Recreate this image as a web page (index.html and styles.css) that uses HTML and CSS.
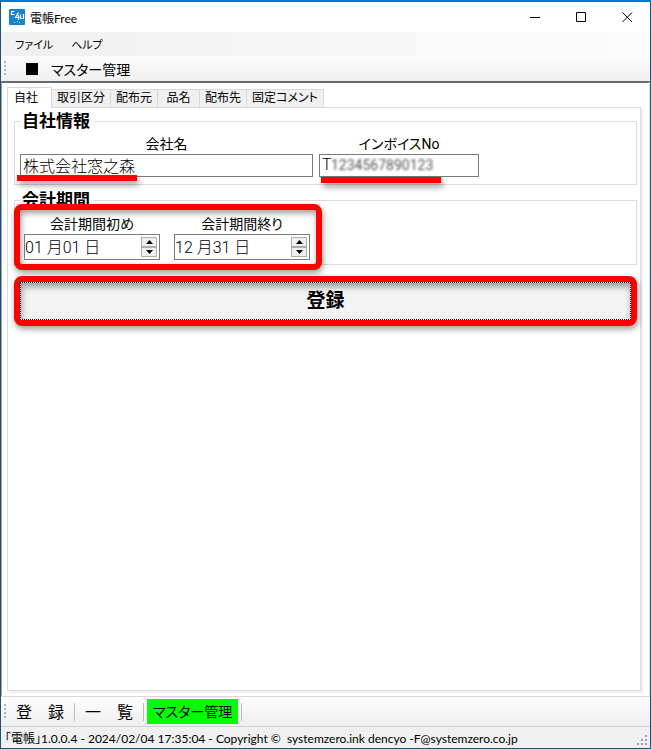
FILE: index.html
```html
<!DOCTYPE html>
<html lang="ja">
<head>
    <meta charset="UTF-8">
    <meta name="viewport" content="width=device-width, initial-scale=1.0">
    <title>電帳Free</title>
    <link rel="stylesheet" href="styles.css">
</head>
<body>
    <header class="titlebar">
        <svg class="app-icon" width="16" height="16" viewBox="0 0 16 16">
            <rect width="16" height="16" rx="1" fill="#1683cf"/>
            <path d="M5.500 2.500H2.500V5.500H5.500M9.500 3.500L6.500 8.500H10.500M9.500 6V11M11.500 5.500V9.500H14.500V5" fill="none" stroke="#fff" stroke-width="1.200"/>
            <path d="M5 13.500H6M8 12.500H9M10 13.500H11" stroke="#bfe2f7"/>
        </svg>
        <h1>電帳Free</h1>
        <div class="window-buttons">
            <button type="button" aria-label="最小化"><svg width="11" height="11"><path d="M0 5.500H10" stroke="#000"/></svg></button>
            <button type="button" aria-label="最大化"><svg width="11" height="11"><path d="M.5 .5H9.500V9.500H.5Z" fill="none" stroke="#000"/></svg></button>
            <button type="button" aria-label="閉じる"><svg width="11" height="11"><path d="M.5 .5L10 10M10 .5L.5 10" stroke="#000"/></svg></button>
        </div>
    </header>

    <nav class="menu">
        <button type="button">ファイル</button>
        <button type="button">ヘルプ</button>
    </nav>

    <div class="toolbar toolbar-title">
        <span class="grip"></span>
        <span class="square"></span>
        <h2>マスター管理</h2>
    </div>

    <main class="content">
        <div class="tabs" role="tablist">
            <button type="button" class="tab active" role="tab" aria-selected="true">自社</button>
            <button type="button" class="tab" role="tab">取引区分</button>
            <button type="button" class="tab" role="tab">配布元</button>
            <button type="button" class="tab" role="tab">品名</button>
            <button type="button" class="tab" role="tab">配布先</button>
            <button type="button" class="tab" role="tab">固定コメント</button>
        </div>

        <form class="panel">
            <fieldset class="group">
                <legend>自社情報</legend>
                <div class="fields">
                    <div class="field company">
                        <label for="company">会社名</label>
                        <input type="text" id="company" value="株式会社窓之森">
                        <span class="underline"></span>
                    </div>
                    <div class="field invoice">
                        <label for="invoice">インボイスNo</label>
                        <input type="text" id="invoice" value="T">
                        <span class="mosaic">1234567890123</span>
                        <span class="underline"></span>
                    </div>
                </div>
            </fieldset>

            <fieldset class="group period">
                <legend>会計期間</legend>
                <div class="marked dates">
                    <div class="field">
                        <label for="start">会計期間初め</label>
                        <div class="spinner">
                            <input type="text" id="start" value="01 月01 日">
                            <div class="arrows">
                                <button type="button" aria-label="上"><svg width="7" height="4"><path d="M0 4L3.500 0L7 4Z"/></svg></button>
                                <button type="button" aria-label="下"><svg width="7" height="4"><path d="M0 0L3.500 4L7 0Z"/></svg></button>
                            </div>
                        </div>
                    </div>
                    <div class="field">
                        <label for="end">会計期間終り</label>
                        <div class="spinner">
                            <input type="text" id="end" value="12 月31 日">
                            <div class="arrows">
                                <button type="button" aria-label="上"><svg width="7" height="4"><path d="M0 4L3.500 0L7 4Z"/></svg></button>
                                <button type="button" aria-label="下"><svg width="7" height="4"><path d="M0 0L3.500 4L7 0Z"/></svg></button>
                            </div>
                        </div>
                    </div>
                </div>
            </fieldset>

            <div class="marked submit">
                <button type="button">登録</button>
            </div>
        </form>
    </main>

    <nav class="toolbar toolbar-bottom">
        <span class="grip"></span>
        <button type="button">登　録</button>
        <span class="separator"></span>
        <button type="button">一　覧</button>
        <span class="separator"></span>
        <button type="button" class="current">マスター管理</button>
        <span class="separator"></span>
    </nav>

    <footer class="status">
        <span>｢電帳｣1.0.0.4 - 2024/02/04 17:35:04 - Copyright ©&nbsp; systemzero.ink dencyo -F@systemzero.co.jp</span>
        <svg class="resize" width="11" height="11" fill="#a0a0a0">
            <path d="M8 0h2v2h-2zM4 4h2v2h-2zM8 4h2v2h-2zM0 8h2v2h-2zM4 8h2v2h-2zM8 8h2v2h-2z"/>
        </svg>
    </footer>
</body>
</html>
```
FILE: styles.css
```css
* {
    margin: 0;
    padding: 0;
    box-sizing: border-box;
}

body {
    display: flex;
    flex-direction: column;
    min-height: 100vh;
    background: #fff;
    border: 1px solid #1b5478;
    border-top: 2px solid #0078d0;
    color: #000;
    font-family: Lato, "Noto Sans CJK JP", sans-serif;
    font-size: 12px;
}

button, input {
    font: inherit;
    color: inherit;
    border: none;
    background: none;
}

svg {
    display: block;
}

/* title bar */
.titlebar {
    display: flex;
    align-items: center;
    height: 30px;
    padding-left: 8px;
}

.titlebar h1 {
    flex: 1;
    margin-left: 5px;
    font-size: 12px;
    font-weight: normal;
}

.window-buttons {
    display: flex;
}

.window-buttons button {
    display: flex;
    align-items: center;
    justify-content: center;
    width: 46px;
    height: 30px;
}

.menu {
    display: flex;
    gap: 18px;
    height: 24px;
    padding-left: 14px;
    background: linear-gradient(to right, #f0f0f0, #fcfcfc);
    font-size: 11px;
    font-feature-settings: "palt";
}

/* tool strips */
.toolbar {
    display: flex;
    align-items: center;
    background: linear-gradient(#fdfdfd, #efefef);
    font-feature-settings: "palt";
}

.grip {
    width: 2px;
    height: 16px;
    margin-left: 3px;
    background: repeating-linear-gradient(#b4b4b4 0 2px, transparent 2px 4px);
}

.toolbar-title {
    height: 25px;
}

.square {
    width: 12px;
    height: 12px;
    margin: 0 13px 0 20px;
    background: #000;
}

.toolbar h2 {
    font-size: 14px;
    font-weight: normal;
}

.toolbar-bottom {
    height: 31px;
    border-top: 1px solid #d9d9d9;
    border-bottom: 1px solid #d0d0d0;
}

.toolbar-bottom button {
    height: 25px;
    padding: 0 5px;
    margin: 0 5px;
    font-size: 16px;
    line-height: 25px;
    font-feature-settings: normal;
}

.toolbar-bottom .current {
    padding: 0 6px;
    margin: 0 3px;
    background: #00ff00;
    font-size: 14px;
    font-feature-settings: "palt";
}

.separator {
    width: 1px;
    height: 18px;
    background: #bdbdbd;
}

/* tabs */
.content {
    flex: 1;
    display: flex;
    flex-direction: column;
    padding: 4px 8px 5px 5px;
    border: 1px solid #a0a0a0;
    border-top: 2px solid #696969;
    border-right-color: #e3e3e3;
    border-bottom: none;
    font-family: Roboto, "Noto Sans CJK JP", sans-serif;
}

.tabs {
    display: flex;
    align-items: flex-end;
    height: 20px;
    font-feature-settings: "palt";
}

.tab {
    min-width: 42px;
    height: 18px;
    padding: 0 5px;
    border: 1px solid #d9d9d9;
    border-left: none;
    border-bottom: none;
    background: #f0f0f0;
    line-height: 17px;
}

.tab.active {
    z-index: 1;
    height: 21px;
    margin-bottom: -1px;
    padding: 0 13px 0 6px;
    border-left: 1px solid #d9d9d9;
    background: #fff;
}

.panel {
    flex: 1;
    padding: 2px 3px 0 6px;
    border: 1px solid #dcdcdc;
    box-shadow: 2px 2px 0 #f0f0f0;
}

/* groups */
.group {
    min-width: 0;
    height: 75px;
    padding: 0 5px;
    border: 1px solid #dcdcdc;
}

.group legend {
    height: 22px;
    padding: 0 4px 0 2px;
    font-size: 17px;
    font-weight: bold;
    line-height: 22px;
}

.fields {
    display: flex;
    gap: 6px;
    padding-top: 2px;
}

.field {
    position: relative;
    display: flex;
    flex-direction: column;
    min-width: 0;
}

.field label {
    font-size: 14px;
    line-height: 20px;
    text-align: center;
    font-feature-settings: "palt";
}

.field input {
    min-width: 0;
    height: 23px;
    padding: 0 2px 2px;
    border: 1px solid #7a7a7a;
    background: #fff;
    font-size: 16px;
    font-weight: 300;
}

.company {
    width: 293px;
}

.invoice {
    width: 160px;
}

.mosaic {
    position: absolute;
    left: 12px;
    bottom: 3px;
    color: #555;
    font-size: 14px;
    line-height: 18px;
    filter: blur(1px);
}

.underline {
    position: absolute;
    left: -3px;
    bottom: -4px;
    width: 120px;
    height: 6px;
    background: #f00;
    box-shadow: 2px 4px 6px rgba(0, 0, 0, 0.4);
}

.invoice .underline {
    left: 2px;
    bottom: -6px;
}

.period {
    height: 76px;
    margin-top: 4px;
}

/* red frames around the parts to fill in */
.marked {
    position: relative;
    border: 6px solid #f00;
    border-radius: 8px;
    box-shadow: 1px 3px 6px rgba(0, 0, 0, 0.4), inset 1px 3px 6px rgba(0, 0, 0, 0.4);
}

.dates {
    display: flex;
    gap: 14px;
    width: 308px;
    height: 66px;
    margin: -7px 0 0 -6px;
    padding: 4px 6px 4px 4px;
    background: #fff;
}

.dates .field {
    flex: 1;
}

.spinner {
    display: flex;
    height: 26px;
    border: 1px solid #7a7a7a;
    background: #fff;
}

.spinner input {
    flex: 1;
    height: 24px;
    padding: 0 0 2px;
    border: none;
}

.arrows {
    display: flex;
    flex-direction: column;
    width: 16px;
    margin: 2px;
}

.arrows button {
    flex: 1;
    display: flex;
    align-items: center;
    justify-content: center;
    border: 1px solid #adadad;
    background: #f0f0f0;
}

.submit {
    display: flex;
    height: 50px;
    margin-top: 11px;
}

.submit button {
    flex: 1;
    padding-bottom: 6px;
    border: 1px dotted #000;
    background: #f3f3f3;
    box-shadow: inset 1px 4px 6px rgba(0, 0, 0, 0.35);
    font-size: 19px;
    font-weight: bold;
}

/* status bar */
.status {
    display: flex;
    align-items: center;
    justify-content: space-between;
    height: 21px;
    padding: 0 2px 0 4px;
    background: #f0f0f0;
}

.resize {
    align-self: flex-end;
    margin-bottom: 2px;
}
```
